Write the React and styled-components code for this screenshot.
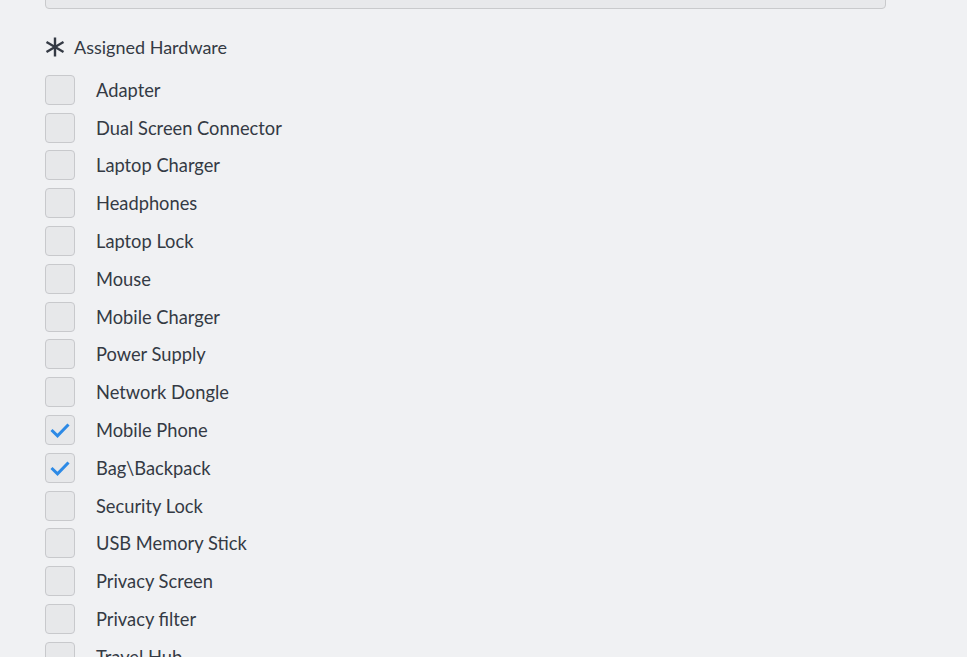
import styled, { createGlobalStyle } from 'styled-components';

const GlobalStyle = createGlobalStyle`
  html, body {
    margin: 0;
    padding: 0;
    background-color: #f0f1f3;
    font-family: 'Source Sans Pro', Lato, 'Noto Sans', sans-serif;
    color: #343a44;
  }
`;

const Page = styled.div`
  padding: 0 81px 0 45px;
  height: 657px;
  overflow: hidden;
`;

const FieldAbove = styled.div`
  height: 38px;
  margin-top: -31px;
  background-color: #e8e9eb;
  border: 1px solid #c9cacc;
  border-radius: 4px;
`;

const Label = styled.div`
  display: flex;
  align-items: center;
  gap: 9px;
  margin-top: 28px;
  height: 20px;
  font-size: 18px;
  color: #343a44;
`;

const Asterisk = styled.svg`
  width: 20px;
  height: 20px;
  flex: none;
`;

const List = styled.div`
  display: flex;
  flex-direction: column;
  margin-top: 14px;
`;

const Row = styled.label`
  display: flex;
  align-items: center;
  height: 37.8px;
  gap: 21px;
  font-size: 18.3px;
  color: #343a44;
`;

const Box = styled.span`
  width: 28px;
  height: 28px;
  flex: none;
  box-sizing: content-box;
  background-color: #e7e8ea;
  border: 1px solid #c8c9cc;
  border-radius: 4px;
  display: flex;
  align-items: center;
  justify-content: center;
`;

const items = [
  ['Adapter', false],
  ['Dual Screen Connector', false],
  ['Laptop Charger', false],
  ['Headphones', false],
  ['Laptop Lock', false],
  ['Mouse', false],
  ['Mobile Charger', false],
  ['Power Supply', false],
  ['Network Dongle', false],
  ['Mobile Phone', true],
  ['Bag\\Backpack', true],
  ['Security Lock', false],
  ['USB Memory Stick', false],
  ['Privacy Screen', false],
  ['Privacy filter', false],
  ['Travel Hub', false],
];

export default function App() {
  return (
    <>
      <GlobalStyle />
      <Page>
        <FieldAbove />
        <Label>
          <Asterisk viewBox="0 0 20 20">
            <g stroke="#343a44" strokeWidth="2.4" strokeLinecap="butt">
              <line x1="10" y1="0.5" x2="10" y2="19.5" />
              <line x1="1.5" y1="5" x2="18.5" y2="15" />
              <line x1="1.5" y1="15" x2="18.5" y2="5" />
            </g>
          </Asterisk>
          Assigned Hardware
        </Label>
        <List>
          {items.map(([name, checked]) => (
            <Row key={name}>
              <Box>
                {checked && (
                  <svg width="20" height="16" viewBox="0 0 20 16">
                    <path d="M1.5 8 L7.5 13.8 L18.5 2.5" fill="none" stroke="#2d8ae6" strokeWidth="3" />
                  </svg>
                )}
              </Box>
              {name}
            </Row>
          ))}
        </List>
      </Page>
    </>
  );
}
